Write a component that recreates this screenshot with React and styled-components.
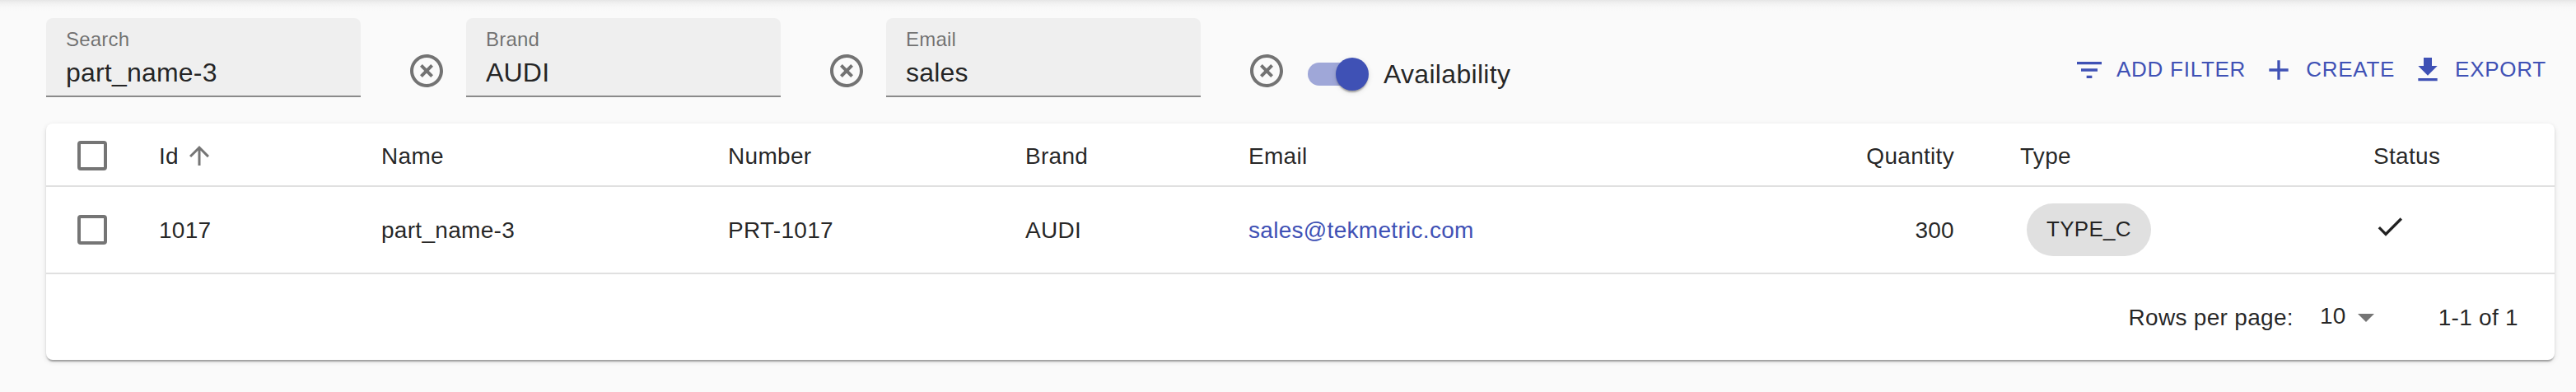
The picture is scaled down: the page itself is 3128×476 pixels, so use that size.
import React from "react";
import styled, { createGlobalStyle } from "styled-components";

const Global = createGlobalStyle`
  *, *::before, *::after { box-sizing: border-box; }
  body {
    margin: 0;
    background: #fafafa;
    color: rgba(0, 0, 0, 0.87);
    font-family: "Liberation Sans", Helvetica, Arial, sans-serif;
    -webkit-font-smoothing: antialiased;
  }
`;

const Page = styled.main`
  height: 476px;
  padding: 22px 26px 0 56px;
  overflow: hidden;
  background: linear-gradient(to bottom, #e6e6e6 0, #ececec 2px, #f3f3f3 5px, #f8f8f8 9px, #fafafa 13px) #fafafa;
`;

const Toolbar = styled.header`
  display: flex;
  align-items: flex-start;
  height: 128px;
`;

const Field = styled.label`
  display: flex;
  flex-direction: column;
  width: 382px;
  height: 96px;
  padding: 12px 24px 0;
  border-radius: 8px 8px 0 0;
  background: linear-gradient(to top, #8a8a8a 2px, #efefef 2px);
`;

const FieldLabel = styled.span`
  font-size: 24px;
  line-height: 27px;
  letter-spacing: 0.2px;
  color: rgba(0, 0, 0, 0.54);
`;

const FieldValue = styled.span`
  margin-top: 9px;
  font-size: 32px;
  line-height: 36px;
  letter-spacing: 0.2px;
`;

const Icon = styled.svg`
  display: block;
  flex: none;
  width: ${(p) => p.$size}px;
  height: ${(p) => p.$size}px;
  fill: currentColor;
`;

const ClearButton = styled.span`
  display: flex;
  margin: 40px 24px 0 56px;
  color: rgba(0, 0, 0, 0.54);
`;

const SwitchControl = styled.div`
  display: flex;
  align-items: center;
  height: 40px;
  margin: 48px 0 0 2px;
`;

const Track = styled.span`
  display: flex;
  align-items: center;
  width: 68px;
  height: 28px;
  border-radius: 14px;
  background: #9fa7d8;
`;

const Thumb = styled.span`
  flex: none;
  width: 40px;
  height: 40px;
  margin-left: 34px;
  border-radius: 50%;
  background: #3f51b5;
  box-shadow: 0 4px 2px -2px rgba(0, 0, 0, 0.2), 0 2px 2px rgba(0, 0, 0, 0.14), 0 2px 6px rgba(0, 0, 0, 0.12);
`;

const SwitchLabel = styled.span`
  margin-left: 24px;
  font-size: 32px;
  line-height: 36px;
  letter-spacing: 0.3px;
`;

const Actions = styled.div`
  display: flex;
  margin: 43px 0 0 auto;
  padding-right: 10px;
  gap: 20px;
`;

const Action = styled.span`
  display: flex;
  align-items: center;
  gap: 13px;
  height: 40px;
  color: #3f51b5;
  font-size: 26px;
  line-height: 30px;
  letter-spacing: 0.74px;
  white-space: nowrap;
`;

const ActionText = styled.span`
  padding-bottom: 2px;
`;

const Card = styled.section`
  width: 3046px;
  height: 287px;
  border-radius: 8px;
  background: #fff;
  box-shadow: 0 4px 2px -2px rgba(0, 0, 0, 0.2), 0 2px 2px rgba(0, 0, 0, 0.14), 0 2px 6px rgba(0, 0, 0, 0.12);
`;

const Row = styled.div`
  display: grid;
  grid-template-columns: 137px 270px 421px 361px 271px 857px 80px 429px 220px;
  align-items: center;
  height: ${(p) => p.$height}px;
  padding-top: ${(p) => p.$top || 0}px;
  border-bottom: 2px solid #e0e0e0;
  font-size: 28px;
  line-height: 32px;
  letter-spacing: 0.3px;
`;

const Cell = styled.div`
  display: flex;
  align-items: center;
`;

const CellText = styled.span`
  padding-top: 2px;
`;

const EmailCell = styled(Cell)`
  justify-content: space-between;
`;

const SortIcon = styled.span`
  margin-left: 7px;
  color: rgba(0, 0, 0, 0.54);
`;

const Checkbox = styled.span`
  width: 36px;
  height: 36px;
  margin-left: 38px;
  border: 4px solid #757575;
  border-radius: 4px;
`;

const EmailLink = styled.a`
  color: #3f51b5;
`;

const Chip = styled.span`
  height: 64px;
  margin-left: 8px;
  padding: 0 24px;
  border-radius: 32px;
  background: #e0e0e0;
  font-size: 26px;
  line-height: 62px;
`;

const StatusIcon = styled.span`
  margin: 0 0 8px;
`;

const Pagination = styled.footer`
  display: flex;
  align-items: center;
  justify-content: flex-end;
  height: 106px;
  padding-right: 44px;
  font-size: 28px;
  line-height: 32px;
  letter-spacing: 0.3px;
`;

const PageSize = styled.span`
  display: flex;
  align-items: center;
  margin: 0 64px 4px 32px;
`;

const PageSizeArrow = styled.span`
  padding-top: 2px;
  color: rgba(0, 0, 0, 0.54);
`;

const paths = {
  clear: "M14.59 8L12 10.59 9.41 8 8 9.41 10.59 12 8 14.59 9.41 16 12 13.41 14.59 16 16 14.59 13.41 12 16 9.41 14.59 8zM12 2C6.47 2 2 6.47 2 12s4.47 10 10 10 10-4.47 10-10S17.53 2 12 2zm0 18c-4.41 0-8-3.59-8-8s3.59-8 8-8 8 3.59 8 8-3.59 8-8 8z",
  filter: "M10 18h4v-2h-4v2zM3 6v2h18V6H3zm3 7h12v-2H6v2z",
  add: "M19 13h-6v6h-2v-6H5v-2h6V5h2v6h6v2z",
  download: "M19 9h-4V3H9v6H5l7 7 7-7zM5 18v2h14v-2H5z",
  up: "M4 12l1.41 1.41L11 7.83V20h2V7.83l5.58 5.59L20 12l-8-8-8 8z",
  done: "M9 16.2L4.8 12l-1.4 1.4L9 19 21 7l-1.4-1.4L9 16.2z",
  dropdown: "M7 10l5 5 5-5z",
};

const Glyph = ({ name, size }) => (
  <Icon viewBox="0 0 24 24" $size={size} aria-hidden="true">
    <path d={paths[name]} />
  </Icon>
);

const TextFilter = ({ label, value }) => (
  <Field>
    <FieldLabel>{label}</FieldLabel>
    <FieldValue>{value}</FieldValue>
  </Field>
);

const Clear = () => (
  <ClearButton>
    <Glyph name="clear" size={48} />
  </ClearButton>
);

const ToolbarAction = ({ icon, children }) => (
  <Action>
    <Glyph name={icon} size={40} />
    <ActionText>{children}</ActionText>
  </Action>
);

const TextCell = ({ children }) => (
  <Cell>
    <CellText>{children}</CellText>
  </Cell>
);

export default function App() {
  return (
    <Page>
      <Global />
      <Toolbar>
        <TextFilter label="Search" value="part_name-3" />
        <Clear />
        <TextFilter label="Brand" value="AUDI" />
        <Clear />
        <TextFilter label="Email" value="sales" />
        <Clear />
        <SwitchControl>
          <Track>
            <Thumb />
          </Track>
          <SwitchLabel>Availability</SwitchLabel>
        </SwitchControl>
        <Actions>
          <ToolbarAction icon="filter">ADD FILTER</ToolbarAction>
          <ToolbarAction icon="add">CREATE</ToolbarAction>
          <ToolbarAction icon="download">EXPORT</ToolbarAction>
        </Actions>
      </Toolbar>
      <Card>
        <Row $height={77} $top={3}>
          <Cell><Checkbox /></Cell>
          <Cell>
            <CellText>Id</CellText>
            <SortIcon><Glyph name="up" size={36} /></SortIcon>
          </Cell>
          <TextCell>Name</TextCell>
          <TextCell>Number</TextCell>
          <TextCell>Brand</TextCell>
          <EmailCell>
            <CellText>Email</CellText>
            <CellText>Quantity</CellText>
          </EmailCell>
          <Cell />
          <TextCell>Type</TextCell>
          <TextCell>Status</TextCell>
        </Row>
        <Row $height={106}>
          <Cell><Checkbox /></Cell>
          <TextCell>1017</TextCell>
          <TextCell>part_name-3</TextCell>
          <TextCell>PRT-1017</TextCell>
          <TextCell>AUDI</TextCell>
          <EmailCell>
            <CellText><EmailLink>sales@tekmetric.com</EmailLink></CellText>
            <CellText>300</CellText>
          </EmailCell>
          <Cell />
          <Cell><Chip>TYPE_C</Chip></Cell>
          <Cell><StatusIcon><Glyph name="done" size={40} /></StatusIcon></Cell>
        </Row>
        <Pagination>
          <span>Rows per page:</span>
          <PageSize>
            10
            <PageSizeArrow><Glyph name="dropdown" size={48} /></PageSizeArrow>
          </PageSize>
          <span>1-1 of 1</span>
        </Pagination>
      </Card>
    </Page>
  );
}
